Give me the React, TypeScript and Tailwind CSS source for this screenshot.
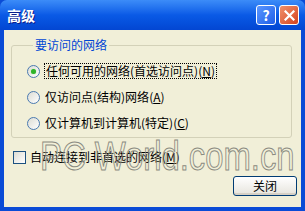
import React from "react";

const font = { fontFamily: '"Noto Sans CJK SC", "Noto Sans", sans-serif' };

const Radio: React.FC<{ checked?: boolean }> = ({ checked }) => (
  <span className="relative flex h-[13px] w-[13px] shrink-0 items-center justify-center rounded-full border border-[#4a7ab0] bg-gradient-to-br from-[#dcdcd4] to-white">
    {checked && (
      <span className="h-[5px] w-[5px] rounded-full bg-[#2fb32a] shadow-[0_0_1px_#7fe07a]" />
    )}
  </span>
);

const Option: React.FC<{ checked?: boolean; focus?: boolean; label: string; key_: string }> = ({
  checked,
  focus,
  label,
  key_,
}) => (
  <div className="flex h-[26px] items-center gap-[5px]">
    <Radio checked={checked} />
    <span
      className={
        "text-[12px] leading-[14px] text-black " +
        (focus ? "outline outline-1 outline-dotted outline-black px-[1px]" : "")
      }
    >
      {label}(<span className="underline">{key_}</span>)
    </span>
  </div>
);

export default function App() {
  return (
    <div
      className="relative flex h-[211px] w-[305px] flex-col overflow-hidden bg-[#0a4bd6]"
      style={font}
    >
      {/* title bar */}
      <div className="flex h-[30px] shrink-0 items-center justify-between rounded-t-[7px] bg-gradient-to-b from-[#3c8cf8] via-[#0a5ae6] to-[#0346d2] pl-[7px] pr-[6px]">
        <span className="text-[14px] font-bold text-white [text-shadow:1px_1px_0_#0a1e8c]">高级</span>
        <div className="flex gap-[3px]">
          <div className="flex h-[20px] w-[20px] items-center justify-center rounded-[3px] border border-white bg-gradient-to-br from-[#5a96ff] to-[#1f5ee8] text-[14px] font-bold leading-none text-white">
            ?
          </div>
          <div className="flex h-[20px] w-[20px] items-center justify-center rounded-[3px] border border-white bg-gradient-to-br from-[#f0906a] to-[#d4401c]">
            <svg width="11" height="11" viewBox="0 0 11 11">
              <path d="M1.5 1.5 L9.5 9.5 M9.5 1.5 L1.5 9.5" stroke="white" strokeWidth="2.2" strokeLinecap="square" />
            </svg>
          </div>
        </div>
      </div>

      {/* client */}
      <div className="mx-[4px] mb-[4px] flex flex-1 flex-col bg-[#f1efd8] px-[7px] pt-[7px]">
        <fieldset className="mr-[2px] rounded-[3px] border border-[#d3d1b8] pb-[1px] pl-[15px]">
          <legend className="ml-[6px] px-[2px] text-[12px] leading-[16px] text-[#0046d5]">要访问的网络</legend>
          <div className="pt-[5px]">
            <Option checked focus label="任何可用的网络(首选访问点)" key_="N" />
            <Option label="仅访问点(结构)网络" key_="A" />
            <Option label="仅计算机到计算机(特定)" key_="C" />
          </div>
        </fieldset>

        <div className="mt-[12px] flex items-center gap-[4px] pl-[2px]">
          <span className="h-[13px] w-[13px] shrink-0 border border-[#1c5180] bg-gradient-to-br from-[#dcdcd4] to-white" />
          <span className="text-[12px] leading-[14px] text-black">
            自动连接到非首选的网络(<span className="underline">M</span>)
          </span>
        </div>

        <div className="-mr-[3px] mt-[12px] flex justify-end">
          <button className="h-[20px] w-[64px] rounded-[3px] border border-[#003c74] bg-gradient-to-b from-white to-[#e6e4dc] text-[12px] leading-none text-black shadow-[inset_0_-2px_0_#d6d0c5]">
            关闭
          </button>
        </div>
      </div>

      {/* watermark */}
      <span
        className="pointer-events-none absolute left-[40px] top-[136px] origin-left scale-x-[0.82] whitespace-nowrap text-[40px] leading-none text-transparent [-webkit-text-stroke:1px_#8a8a80]"
        style={{ fontFamily: '"Liberation Sans", Arial, sans-serif' }}
      >
        PC World.com.cn
      </span>
    </div>
  );
}
